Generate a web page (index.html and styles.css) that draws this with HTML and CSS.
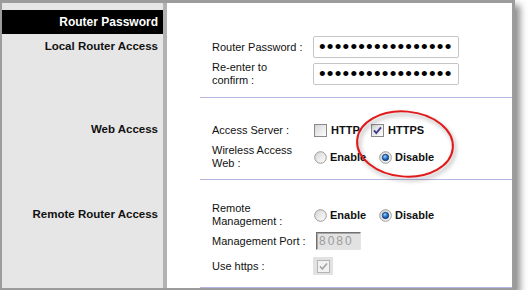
FILE: index.html
```html
<!DOCTYPE html>
<html lang="en">
<head>
    <meta charset="UTF-8">
    <title>Router Password</title>
    <link rel="stylesheet" href="styles.css">
</head>
<body>
    <svg class="defs" width="0" height="0">
        <defs>
            <linearGradient id="fillBox" x1="0" y1="0" x2="1" y2="1">
                <stop offset="0" stop-color="#d4d4d4"/>
                <stop offset="1" stop-color="#ffffff"/>
            </linearGradient>
            <radialGradient id="fillDot" cx="0.4" cy="0.35" r="0.7">
                <stop offset="0" stop-color="#9fd4ff"/>
                <stop offset="0.5" stop-color="#2a78d0"/>
                <stop offset="1" stop-color="#0c3a80"/>
            </radialGradient>
        </defs>
    </svg>

    <div class="frame">
        <div class="side side-head"><div class="head-bar">Router Password</div></div>
        <div class="main"></div>

        <!-- local access -->
        <div class="side side-local"><span class="title">Local Router Access</span></div>
        <div class="main">
            <div class="group group-pass">
                <div class="field">
                    <span class="label">Router Password :</span>
                    <input class="pass" type="password" value="routerpassword123">
                </div>
                <div class="field">
                    <span class="label">Re-enter to<br>confirm :</span>
                    <input class="pass" type="password" value="routerpassword123">
                </div>
            </div>
        </div>

        <!-- web access -->
        <div class="side side-web"><span class="title">Web Access</span></div>
        <div class="main">
            <div class="group group-web">
                <div class="field">
                    <span class="label">Access Server :</span>
                    <span class="controls">
                        <span class="opt opt-check">
                            <svg width="13" height="13" viewBox="0 0 13 13"><rect x="0.5" y="0.5" width="12" height="12" fill="url(#fillBox)" stroke="#8a8a8a"/></svg>
                            HTTP
                        </span>
                        <span class="opt opt-check">
                            <svg width="13" height="13" viewBox="0 0 13 13"><rect x="0.5" y="0.5" width="12" height="12" fill="url(#fillBox)" stroke="#8a8a8a"/><path d="M3 6.3 L5.3 9 L10 3.4" fill="none" stroke="#3c3c8c" stroke-width="1.8"/></svg>
                            HTTPS
                        </span>
                    </span>
                </div>
                <div class="field">
                    <span class="label">Wireless Access<br>Web :</span>
                    <span class="controls">
                        <span class="opt opt-radio">
                            <svg width="13" height="13" viewBox="0 0 13 13"><circle cx="6.5" cy="6.5" r="5.8" fill="url(#fillBox)" stroke="#9a9a9a"/></svg>
                            Enable
                        </span>
                        <span class="opt opt-radio">
                            <svg width="13" height="13" viewBox="0 0 13 13"><circle cx="6.5" cy="6.5" r="5.8" fill="url(#fillBox)" stroke="#9a9a9a"/><circle cx="6.5" cy="6.5" r="3.2" fill="url(#fillDot)" stroke="#15386a" stroke-width="0.8"/></svg>
                            Disable
                        </span>
                    </span>
                </div>
            </div>
        </div>

        <!-- remote access -->
        <div class="side side-remote"><span class="title">Remote Router Access</span></div>
        <div class="main">
            <div class="group group-remote">
                <div class="field">
                    <span class="label">Remote<br>Management :</span>
                    <span class="controls">
                        <span class="opt opt-radio">
                            <svg width="13" height="13" viewBox="0 0 13 13"><circle cx="6.5" cy="6.5" r="5.8" fill="url(#fillBox)" stroke="#9a9a9a"/></svg>
                            Enable
                        </span>
                        <span class="opt opt-radio">
                            <svg width="13" height="13" viewBox="0 0 13 13"><circle cx="6.5" cy="6.5" r="5.8" fill="url(#fillBox)" stroke="#9a9a9a"/><circle cx="6.5" cy="6.5" r="3.2" fill="url(#fillDot)" stroke="#15386a" stroke-width="0.8"/></svg>
                            Disable
                        </span>
                    </span>
                </div>
                <div class="field">
                    <span class="label">Management Port :</span>
                    <input class="port" type="text" value="8080" disabled>
                </div>
                <div class="field">
                    <span class="label">Use https :</span>
                    <span class="check-off">
                        <svg width="13" height="13" viewBox="0 0 13 13"><rect x="0.5" y="0.5" width="12" height="12" fill="#f2f2f2" stroke="#b4b4b4"/><path d="M3 6.3 L5.3 9 L10 3.4" fill="none" stroke="#a4a4a4" stroke-width="1.6"/></svg>
                    </span>
                </div>
            </div>
        </div>

        <svg class="mark" width="112" height="84" viewBox="0 0 112 84">
            <ellipse cx="55" cy="40" rx="48" ry="32.5" transform="rotate(5 55 40)" fill="none" stroke="#e11b1b" stroke-width="2"/>
        </svg>
    </div>
</body>
</html>
```

FILE: styles.css
```css
body {
    margin: 0;
    background: #fff;
    font-family: "Liberation Sans", Arial, sans-serif;
    color: #111;
}
.defs {
    position: absolute;
}
.frame {
    position: relative;
    width: 510px;
    display: grid;
    grid-template-columns: 165px 1fr;
    background: #fff;
    border: solid #9c9c9c;
    border-width: 3px 3px 2px 2px;
    box-shadow: 5px 5px 7px rgba(0, 0, 0, 0.45);
}
.side {
    background: #e6e6e6;
    border-right: 4px solid #b2b2b2;
    text-align: right;
    padding-right: 5px;
}
.side-head {
    padding-top: 7px;
    padding-right: 0;
}
.head-bar {
    background: #000;
    color: #fff;
    height: 24px;
    line-height: 24px;
    padding-right: 5px;
    font-size: 12px;
    font-weight: bold;
}
.title {
    display: block;
    font-size: 11.5px;
    font-weight: bold;
    line-height: 13px;
}
.side-local {
    padding-top: 6px;
}
.side-web {
    padding-top: 25px;
}
.side-remote {
    padding-top: 28px;
}
.group {
    margin-left: 33px;
    padding-left: 12px;
    border-bottom: 1px solid #b6b6e4;
    display: flex;
    flex-direction: column;
}
.group-pass {
    padding-top: 2px;
    padding-bottom: 12px;
    gap: 5px;
}
.group-pass .field {
    height: 22px;
}
.group-web {
    padding-top: 23px;
    padding-bottom: 9px;
    gap: 5px;
}
.group-remote {
    padding-top: 22px;
    padding-bottom: 12px;
    gap: 4px;
}
.group-remote .field:last-child {
    margin-top: 3px;
}
.field {
    display: flex;
    align-items: center;
    min-height: 18px;
}
.label {
    width: 101px;
    flex: none;
    font-size: 11px;
    line-height: 13px;
}
.pass {
    width: 146px;
    height: 22px;
    box-sizing: border-box;
    margin: 0;
    padding: 0 0 0 5px;
    border: 1px solid #c6c6c6;
    border-radius: 2px;
    font-family: "Liberation Sans", Arial, sans-serif;
    font-size: 19px;
    letter-spacing: 1.2px;
    color: #000;
    outline: none;
}
.controls {
    display: flex;
    align-items: center;
    margin-left: 1px;
}
.opt {
    display: inline-flex;
    align-items: center;
    gap: 4px;
    font-size: 11px;
    font-weight: bold;
}
.opt svg {
    flex: none;
}
.opt-check {
    width: 57px;
}
.opt-radio {
    width: 65px;
    gap: 3px;
}
.port {
    width: 45px;
    height: 18px;
    box-sizing: border-box;
    margin: 0 0 0 3px;
    padding: 0 0 0 2px;
    border: 1px solid;
    border-color: #707070 #e4e4e4 #e4e4e4 #707070;
    box-shadow: inset 1px 1px 0 #a8a8a8;
    background: #e2e2e2;
    font-family: "Liberation Sans", Arial, sans-serif;
    font-size: 12px;
    letter-spacing: 2px;
    color: #9c9c9c;
}
.check-off {
    width: 20px;
    height: 18px;
    display: flex;
    align-items: center;
    justify-content: center;
    background: #e2e2e2;
}
.mark {
    position: absolute;
    left: 348px;
    top: 101px;
    filter: drop-shadow(2px 3px 2px rgba(0, 0, 0, 0.35));
}
```
